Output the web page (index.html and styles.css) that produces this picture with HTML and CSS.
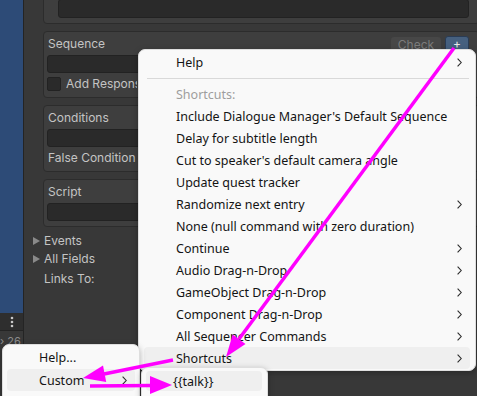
FILE: index.html
```html
<!DOCTYPE html>
<html lang="en">
<head>
<meta charset="utf-8">
<title>Sequence shortcuts menu</title>
<link rel="stylesheet" href="styles.css">
</head>
<body>
<div class="app">
  <aside class="strip">
    <div class="strip-blue"></div>
    <div class="strip-tool">
      <svg width="4" height="12" viewBox="0 0 4 12"><circle cx="2" cy="2" r="1.3"/><circle cx="2" cy="6" r="1.3"/><circle cx="2" cy="10" r="1.3"/></svg>
    </div>
    <div class="strip-foot">› 26</div>
  </aside>
  <main class="inspector">
    <section class="box box-top"><div class="field field-top"></div></section>
    <section class="box box-seq">
      <div class="head">
        <span class="label">Sequence</span>
        <span class="btns"><span class="btn-check">Check</span><span class="btn-plus">+</span></span>
      </div>
      <div class="field"></div>
      <div class="checkrow"><span class="checkbox"></span><span class="label clip clip-add">Add Response Menu Sequence</span></div>
    </section>
    <section class="box">
      <div class="head"><span class="label">Conditions</span></div>
      <div class="field"></div>
      <div class="line"><span class="label clip clip-false">False Condition Action</span></div>
    </section>
    <section class="box">
      <div class="head"><span class="label">Script</span></div>
      <div class="field"></div>
    </section>
    <div class="foldouts">
      <div class="fold"><span class="tri"></span><span class="label">Events</span></div>
      <div class="fold fold-2"><span class="tri"></span><span class="label">All Fields</span></div>
      <div class="links"><span class="label">Links To:</span></div>
    </div>
  </main>
</div>

<div class="menu main-menu">
  <div class="item"><span>Help</span><svg class="chev" width="5" height="9" viewBox="0 0 5 9"><path d="M0.6 0.6 L4.2 4.5 L0.6 8.4"/></svg></div>
  <div class="sep"></div>
  <div class="item muted"><span>Shortcuts:</span></div>
  <div class="item"><span>Include Dialogue Manager's Default Sequence</span></div>
  <div class="item"><span>Delay for subtitle length</span></div>
  <div class="item"><span>Cut to speaker's default camera angle</span></div>
  <div class="item"><span>Update quest tracker</span></div>
  <div class="item"><span>Randomize next entry</span><svg class="chev" width="5" height="9" viewBox="0 0 5 9"><path d="M0.6 0.6 L4.2 4.5 L0.6 8.4"/></svg></div>
  <div class="item"><span>None (null command with zero duration)</span></div>
  <div class="item"><span>Continue</span><svg class="chev" width="5" height="9" viewBox="0 0 5 9"><path d="M0.6 0.6 L4.2 4.5 L0.6 8.4"/></svg></div>
  <div class="item"><span>Audio Drag-n-Drop</span><svg class="chev" width="5" height="9" viewBox="0 0 5 9"><path d="M0.6 0.6 L4.2 4.5 L0.6 8.4"/></svg></div>
  <div class="item"><span>GameObject Drag-n-Drop</span><svg class="chev" width="5" height="9" viewBox="0 0 5 9"><path d="M0.6 0.6 L4.2 4.5 L0.6 8.4"/></svg></div>
  <div class="item"><span>Component Drag-n-Drop</span><svg class="chev" width="5" height="9" viewBox="0 0 5 9"><path d="M0.6 0.6 L4.2 4.5 L0.6 8.4"/></svg></div>
  <div class="item"><span>All Sequencer Commands</span><svg class="chev" width="5" height="9" viewBox="0 0 5 9"><path d="M0.6 0.6 L4.2 4.5 L0.6 8.4"/></svg></div>
  <div class="item hl"><span>Shortcuts</span><svg class="chev" width="5" height="9" viewBox="0 0 5 9"><path d="M0.6 0.6 L4.2 4.5 L0.6 8.4"/></svg></div>
</div>

<div class="menu left-menu">
  <div class="item"><span>Help...</span></div>
  <div class="item hl"><span>Custom</span><svg class="chev" width="5" height="9" viewBox="0 0 5 9"><path d="M0.6 0.6 L4.2 4.5 L0.6 8.4"/></svg></div>
</div>

<div class="menu talk-menu">
  <div class="item hl"><span>{{talk}}</span></div>
</div>

<svg class="arrows" width="477" height="396" viewBox="0 0 477 396">
  <g class="arrow">
    <line x1="454" y1="48" x2="239" y2="339"/>
    <polygon points="226,357 245.5,344.1 232.7,334.5"/>
  </g>
  <g class="arrow">
    <line x1="173" y1="360" x2="104" y2="374"/>
    <polygon points="83,378 106.2,382 103,365.5"/>
  </g>
  <g class="arrow">
    <line x1="90" y1="386" x2="151" y2="385.5"/>
    <polygon points="172,385 150,394 150,376"/>
  </g>
</svg>
</body>
</html>
```
FILE: styles.css
```css
html, body {
  margin: 0;
  padding: 0;
}
body {
  width: 477px;
  height: 396px;
  overflow: hidden;
  position: relative;
  background: #383838;
  font-family: Inter, "Noto Sans", "Liberation Sans", sans-serif;
  font-size: 12px;
  color: #c4c4c4;
}

.app {
  display: flex;
  height: 396px;
}

/* left strip */
.strip {
  flex: none;
  width: 23px;
  border-right: 1px solid #242424;
  display: flex;
  flex-direction: column;
}
.strip-blue {
  height: 313px;
  background: #2d4b77;
}
.strip-tool {
  height: 17px;
  background: #2e2e2e;
  border-bottom: 1px solid #242424;
  display: flex;
  align-items: center;
  justify-content: center;
}
.strip-tool svg {
  fill: #c9c9c9;
}
.strip-foot {
  flex: 1;
  background: #383838;
  color: #8c8c8c;
  font-size: 11px;
  line-height: 14px;
  padding-top: 3px;
  white-space: nowrap;
  overflow: hidden;
}

/* inspector */
.inspector {
  flex: 1;
  overflow: hidden;
  padding-left: 19px;
}
.box {
  width: 437px;
  box-sizing: border-box;
  background: #3e3e3e;
  border: 1px solid #2c2c2c;
  border-radius: 4px;
  padding: 4px 10px 5px 3px;
  margin-top: 7px;
}
.box-top {
  margin-top: -22px;
  height: 46px;
  padding: 20px 10px 0 14px;
}
.box-seq {
  padding-bottom: 6px;
}
.head {
  height: 16px;
  display: flex;
  align-items: center;
  justify-content: space-between;
}
.label {
  padding-left: 1px;
  line-height: 16px;
  white-space: nowrap;
}
.clip {
  overflow: hidden;
}
.clip-add {
  max-width: 71px;
}
.clip-false {
  max-width: 89px;
}
.btns {
  display: flex;
  align-items: center;
  gap: 4px;
}
.btn-check {
  width: 50px;
  height: 15px;
  box-sizing: border-box;
  background: #474747;
  border-radius: 3px;
  color: #7c7c7c;
  font-size: 12px;
  line-height: 15px;
  text-align: center;
}
.btn-plus {
  width: 24px;
  height: 16px;
  box-sizing: border-box;
  background: #46607f;
  border: 1px solid #2a3c55;
  border-radius: 3px;
  color: #e8e8e8;
  font-size: 12px;
  line-height: 13px;
  text-align: center;
}
.field {
  height: 18px;
  margin-top: 3px;
  box-sizing: border-box;
  background: #2a2a2a;
  border: 1px solid #222222;
  border-radius: 3px;
}
.field-top {
  margin-top: 0;
  height: 19px;
}
.checkrow {
  margin-top: 4px;
  height: 14px;
  display: flex;
  align-items: center;
  gap: 4px;
}
.checkbox {
  flex: none;
  width: 14px;
  height: 14px;
  box-sizing: border-box;
  background: #2a2a2a;
  border: 1px solid #222222;
  border-radius: 2px;
}
.line {
  margin-top: 3px;
  height: 16px;
  display: flex;
  align-items: center;
}

.foldouts {
  margin-top: 6px;
}
.fold {
  height: 16px;
  display: flex;
  align-items: center;
  gap: 3px;
  margin-left: -10px;
}
.fold-2 {
  margin-top: 2px;
}
.tri {
  width: 0;
  height: 0;
  border-left: 7px solid #8a8a8a;
  border-top: 4px solid transparent;
  border-bottom: 4px solid transparent;
}
.links {
  margin-top: 4px;
  height: 16px;
  display: flex;
  align-items: center;
}

/* menus */
.menu {
  position: absolute;
  box-sizing: border-box;
  background: #f9f9f9;
  border: 1px solid #dedede;
  border-radius: 7px;
  box-shadow: 0 2px 6px rgba(0, 0, 0, 0.28);
  font-family: "Noto Sans", "Open Sans", "Liberation Sans", sans-serif;
  font-size: 12.5px;
  color: #141414;
}
.item {
  height: 22px;
  display: flex;
  align-items: center;
  justify-content: space-between;
  padding: 0 8px 0 32px;
  border-radius: 4px;
  white-space: nowrap;
}
.item.hl {
  background: #efefef;
}
.item.muted {
  color: #9e9e9e;
}
.chev {
  flex: none;
}
.chev path {
  fill: none;
  stroke: #2a2a2a;
  stroke-width: 1.1;
}
.main-menu {
  left: 138px;
  top: 49px;
  width: 338px;
  height: 322px;
  padding: 1px 5px;
}
.sep {
  height: 10px;
  display: flex;
  align-items: center;
  padding: 0 1px 0 3px;
}
.sep::before {
  content: "";
  flex: 1;
  height: 1px;
  background: #d9d9d9;
}
.left-menu {
  left: 2px;
  top: 344px;
  width: 138px;
  height: 62px;
  padding: 1px 4px;
  display: flex;
  flex-direction: column;
  gap: 1px;
}
.talk-menu {
  left: 141px;
  top: 367px;
  width: 127px;
  height: 40px;
  padding: 3px 5px 0 4px;
}
.talk-menu .item {
  height: 20px;
  padding-left: 27px;
}

/* annotation arrows */
.arrows {
  position: absolute;
  left: 0;
  top: 0;
  pointer-events: none;
}
.arrow line {
  stroke: #ff00ff;
  stroke-width: 3.5;
}
.arrow polygon {
  fill: #ff00ff;
}
```
